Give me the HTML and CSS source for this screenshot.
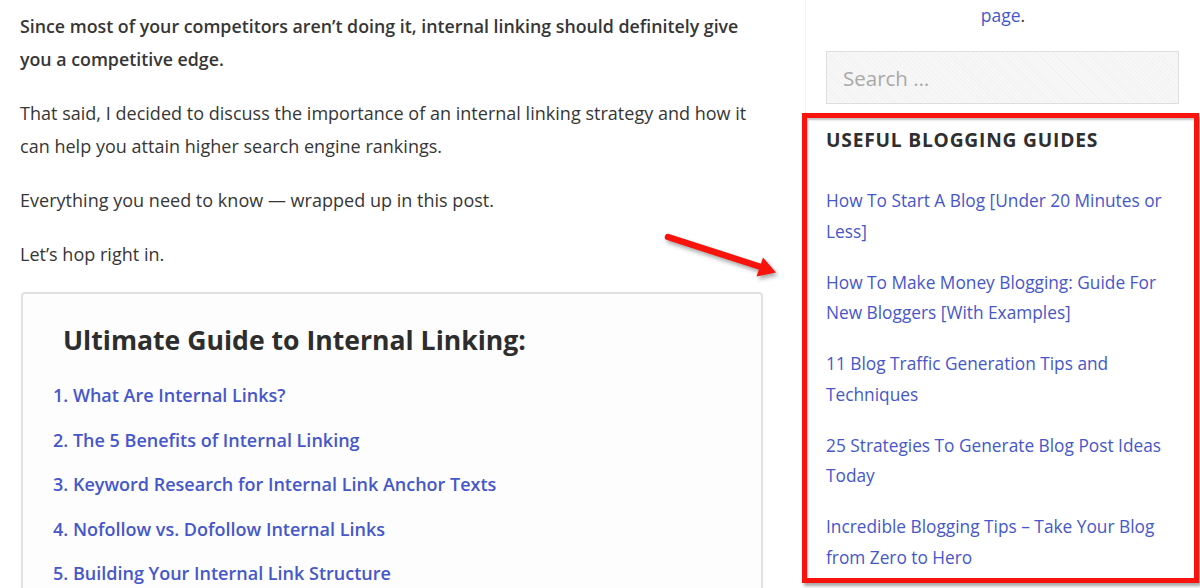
FILE: index.html
```html
<!DOCTYPE html>
<html lang="en">
<head>
<meta charset="utf-8">
<title>Internal Linking</title>
<link rel="stylesheet" href="styles.css">
</head>
<body>
<div class="page">
  <main class="content">
    <p class="lead">Since most of your competitors aren’t doing it, internal linking should definitely give you a competitive edge.</p>
    <p>That said, I decided to discuss the importance of an internal linking strategy and how it can help you attain higher search engine rankings.</p>
    <p>Everything you need to know — wrapped up in this post.</p>
    <p>Let’s hop right in.</p>
    <div class="toc">
      <h2 class="toc-title">Ultimate Guide to Internal Linking:</h2>
      <ol class="toc-list">
        <li><a href="#">1. What Are Internal Links?</a></li>
        <li><a href="#">2. The 5 Benefits of Internal Linking</a></li>
        <li><a href="#">3. Keyword Research for Internal Link Anchor Texts</a></li>
        <li><a href="#">4. Nofollow vs. Dofollow Internal Links</a></li>
        <li><a href="#">5. Building Your Internal Link Structure</a></li>
      </ol>
    </div>
  </main>
  <aside class="sidebar">
    <p class="intro"><a href="#">page</a>.</p>
    <div class="search"><span class="placeholder">Search …</span></div>
    <section class="widget">
      <h3 class="widget-title">USEFUL BLOGGING GUIDES</h3>
      <ul class="guides">
        <li><a href="#">How To Start A Blog [Under 20 Minutes or Less]</a></li>
        <li><a href="#">How To Make Money Blogging: Guide For New Bloggers [With Examples]</a></li>
        <li><a href="#">11 Blog Traffic Generation Tips and Techniques</a></li>
        <li><a href="#">25 Strategies To Generate Blog Post Ideas Today</a></li>
        <li><a href="#">Incredible Blogging Tips – Take Your Blog from Zero to Hero</a></li>
      </ul>
    </section>
  </aside>
  <svg class="arrow" width="130" height="60" viewBox="0 0 130 60" aria-hidden="true">
    <line x1="13" y1="12" x2="106" y2="42" stroke="#f8140c" stroke-width="6.5" stroke-linecap="round"/>
    <polygon points="121,47.5 101.5,51.5 108,32.5" fill="#f8140c"/>
  </svg>
</div>
</body>
</html>
```
FILE: styles.css
```css
html, body {
  margin: 0;
  padding: 0;
  background: #ffffff;
}
body {
  font-family: "Open Sans", "Noto Sans", sans-serif;
  color: #363636;
  height: 588px;
  overflow: hidden;
}
a {
  color: #4657c9;
  text-decoration: none;
}
.page {
  position: relative;
  display: flex;
  width: 1200px;
  height: 588px;
}
.content {
  width: 785px;
  padding: 10px 0 0 20px;
  box-sizing: border-box;
}
.content p {
  margin: 0 0 21px 0;
  font-size: 18px;
  line-height: 33px;
  letter-spacing: 0.02px;
  width: 745px;
}
.content p.lead {
  font-weight: 600;
  font-size: 17.8px;
  letter-spacing: 0;
}
.toc {
  width: 742px;
  margin-left: 1px;
  box-sizing: border-box;
  border: 2px solid #e1e1e1;
  border-radius: 4px;
  background: #fdfdfd;
  padding: 28px 0 0 30px;
  height: 320px;
}
.toc-title {
  margin: 0 0 15px 10px;
  font-size: 26.6px;
  line-height: 36px;
  font-weight: 700;
  color: #2d2d2d;
}
.toc-list {
  list-style: none;
  margin: 0;
  padding: 0;
}
.toc-list li {
  font-size: 18px;
  line-height: 44.6px;
  font-weight: 600;
}
.sidebar {
  width: 395px;
  margin-left: 20px;
  border-left: 1px dotted #e6e6e6;
  box-sizing: border-box;
  height: 113px;
  overflow: visible;
}
.intro {
  margin: 0;
  padding-top: 1px;
  text-align: center;
  font-size: 17.5px;
  line-height: 28px;
  color: #333;
}
.search {
  margin: 22px 21px 0 20px;
  height: 53px;
  box-sizing: border-box;
  border: 1px solid #dedede;
  background-color: #f7f7f7;
  background-image: repeating-linear-gradient(45deg, rgba(0,0,0,0.018) 0, rgba(0,0,0,0.018) 1px, transparent 1px, transparent 3px);
  display: flex;
  align-items: center;
  padding-left: 16px;
}
.placeholder {
  font-size: 20.5px;
  color: #a9a9a9;
}
.widget {
  margin: 9px 0 0 -4px;
  width: 397px;
  height: 470px;
  box-sizing: border-box;
  border: 5px solid #f8140c;
  background: #ffffff;
  padding: 10px 20px 0 19px;
  box-shadow: 2px 3px 3px rgba(0,0,0,0.35), inset 1px 2px 2px rgba(0,0,0,0.25);
}
.widget-title {
  margin: 0 0 34px 0;
  font-size: 19.2px;
  line-height: 24px;
  letter-spacing: 0.8px;
  font-weight: 700;
  color: #2f2f2f;
}
.guides {
  list-style: none;
  margin: 0;
  padding: 0;
}
.guides li {
  font-size: 17.3px;
  line-height: 30.5px;
  margin-bottom: 20.5px;
}
.arrow {
  position: absolute;
  left: 655px;
  top: 225px;
  filter: drop-shadow(2px 3px 2px rgba(0,0,0,0.35));
}
```
